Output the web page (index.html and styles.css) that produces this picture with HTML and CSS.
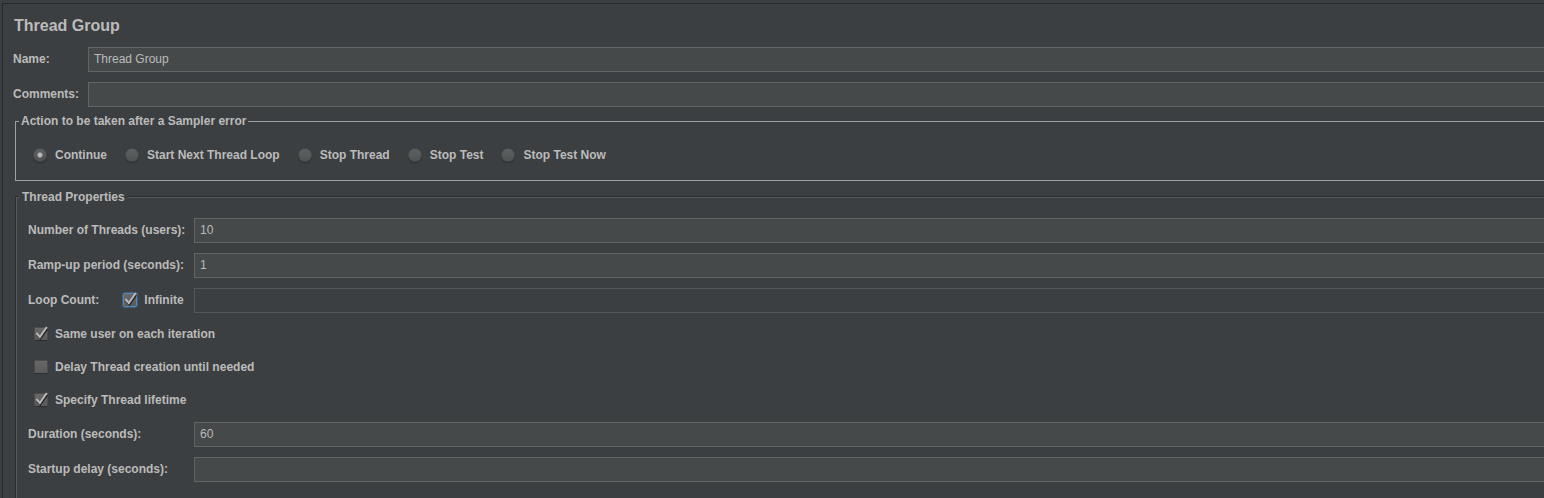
FILE: index.html
```html
<!DOCTYPE html>
<html lang="en">
<head>
<meta charset="utf-8">
<title>Thread Group</title>
<link rel="stylesheet" href="styles.css">
</head>
<body>
<svg class="defs" aria-hidden="true">
  <defs>
    <symbol id="tick" viewBox="0 0 18 18">
      <path d="M5 9.5 L8.3 13.6 L15.2 3.8" fill="none" stroke="#222324" stroke-width="2"/>
      <path d="M4.4 8 L7.8 12 L14.8 2" fill="none" stroke="#b8b8b8" stroke-width="2"/>
    </symbol>
  </defs>
</svg>
<form class="panel">
  <h1 class="title">Thread Group</h1>
  <div class="info">
    <label class="name" for="name">Name:</label>
    <input class="field" id="name" type="text" value="Thread Group">
    <label class="name" for="comments">Comments:</label>
    <input class="field" id="comments" type="text">
  </div>

  <fieldset class="group action">
    <legend>Action to be taken after a Sampler error</legend>
    <div class="options">
      <label class="option"><input class="radio" type="radio" name="action" checked>Continue</label>
      <label class="option"><input class="radio" type="radio" name="action">Start Next Thread Loop</label>
      <label class="option"><input class="radio" type="radio" name="action">Stop Thread</label>
      <label class="option"><input class="radio" type="radio" name="action">Stop Test</label>
      <label class="option"><input class="radio" type="radio" name="action">Stop Test Now</label>
    </div>
  </fieldset>

  <fieldset class="group properties">
    <legend>Thread Properties</legend>
    <div class="rows">
      <label class="name" for="threads">Number of Threads (users):</label>
      <input class="field" id="threads" type="text" value="10">
      <label class="name" for="ramp">Ramp-up period (seconds):</label>
      <input class="field" id="ramp" type="text" value="1">
      <div class="loop">
        <label for="loops">Loop Count:</label>
        <label class="check"><span class="tickbox focused"><input type="checkbox" checked><svg><use href="#tick"/></svg></span>Infinite</label>
      </div>
      <input class="field" id="loops" type="text" disabled>
      <label class="check wide"><span class="tickbox"><input type="checkbox" checked><svg><use href="#tick"/></svg></span>Same user on each iteration</label>
      <label class="check wide"><span class="tickbox"><input type="checkbox"><svg><use href="#tick"/></svg></span>Delay Thread creation until needed</label>
      <label class="check wide"><span class="tickbox"><input type="checkbox" checked><svg><use href="#tick"/></svg></span>Specify Thread lifetime</label>
      <label class="name" for="duration">Duration (seconds):</label>
      <input class="field" id="duration" type="text" value="60">
      <label class="name" for="delay">Startup delay (seconds):</label>
      <input class="field" id="delay" type="text">
    </div>
  </fieldset>
</form>
</body>
</html>
```
FILE: styles.css
```css
* {
  box-sizing: border-box;
}

body {
  margin: 0;
  padding: 3px 0 0 2px;
  background: #3c3f41;
  color: #bbbbbb;
  font: bold 12px/14px "Liberation Sans", Arial, sans-serif;
}

.defs {
  display: none;
}

.panel {
  display: flex;
  flex-direction: column;
  min-height: calc(100vh - 3px);
  padding: 12px 0 0 10px;
  border-top: 1px solid #27292a;
  border-left: 1px solid #27292a;
}

.title {
  margin: 0 0 11px 1px;
  font-size: 16px;
  line-height: 20px;
}

.info,
.rows {
  display: grid;
  align-items: center;
  row-gap: 10px;
}

.info {
  grid-template-columns: 75px 1fr;
}

.name {
  padding-bottom: 1px;
}

.field {
  width: 100%;
  height: 25px;
  margin: 0;
  padding: 0 5px 2px;
  border: 1px solid #646464;
  border-right: 0;
  border-radius: 0;
  outline: 0;
  background: #45494a;
  color: #bbbbbb;
  font: 12px "Liberation Sans", Arial, sans-serif;
}

.field:disabled {
  border-color: #555657;
  background: #3c3f41;
}

.group {
  min-width: 0;
  margin: 0 0 0 2px;
  padding: 0;
  border: 1px solid #a0a0a0;
  border-right: 0;
}

.group legend {
  margin-left: 3px;
  padding: 0 2px;
  background: #3c3f41;
}

.action {
  margin-top: 7px;
}

.options {
  display: flex;
  gap: 18px;
  padding: 20px 0 18px 17px;
}

.option {
  display: flex;
  align-items: center;
  gap: 8px;
  white-space: nowrap;
}

.radio {
  appearance: none;
  width: 14px;
  height: 14px;
  margin: 0;
  border: 1px solid #484b4c;
  border-radius: 50%;
  background: linear-gradient(#5e6162, #505354);
  box-shadow: 0 1px 1px #292b2c;
}

.radio:checked {
  background: radial-gradient(circle, #b8b8b8 2px, transparent 3px), linear-gradient(#5e6162, #505354);
}

.properties {
  flex: 1;
  margin-top: 8px;
  border-color: #292b2c;
  border-bottom: 0;
  box-shadow: inset 1px 1px 0 #57595b;
}

.properties legend {
  padding: 1px 2px 0 3px;
}

.rows {
  grid-template-columns: 166px 1fr;
  padding: 14px 0 16px 12px;
}

.loop {
  display: flex;
  align-items: center;
  gap: 22px;
  padding-bottom: 1px;
}

.check {
  display: flex;
  align-items: center;
  gap: 5px;
}

.wide {
  grid-column: 1 / -1;
  height: 23px;
  padding: 0 0 1px 4px;
}

.tickbox {
  display: grid;
  width: 18px;
  height: 18px;
}

.tickbox input,
.tickbox svg {
  grid-area: 1 / 1;
}

.tickbox input {
  appearance: none;
  place-self: center;
  width: 14px;
  height: 14px;
  margin: 0;
  border: 1px solid #4c4c4c;
  border-bottom-color: #2c2d2e;
  border-radius: 1px;
  background: linear-gradient(#686868, #5a5a5a);
}

.tickbox.focused input {
  border-color: #5a86b4;
  border-radius: 2px;
  box-shadow: 0 0 1px 1px #3f6083;
}

.tickbox svg {
  width: 18px;
  height: 18px;
  pointer-events: none;
}

.tickbox input:not(:checked) + svg {
  visibility: hidden;
}
```
